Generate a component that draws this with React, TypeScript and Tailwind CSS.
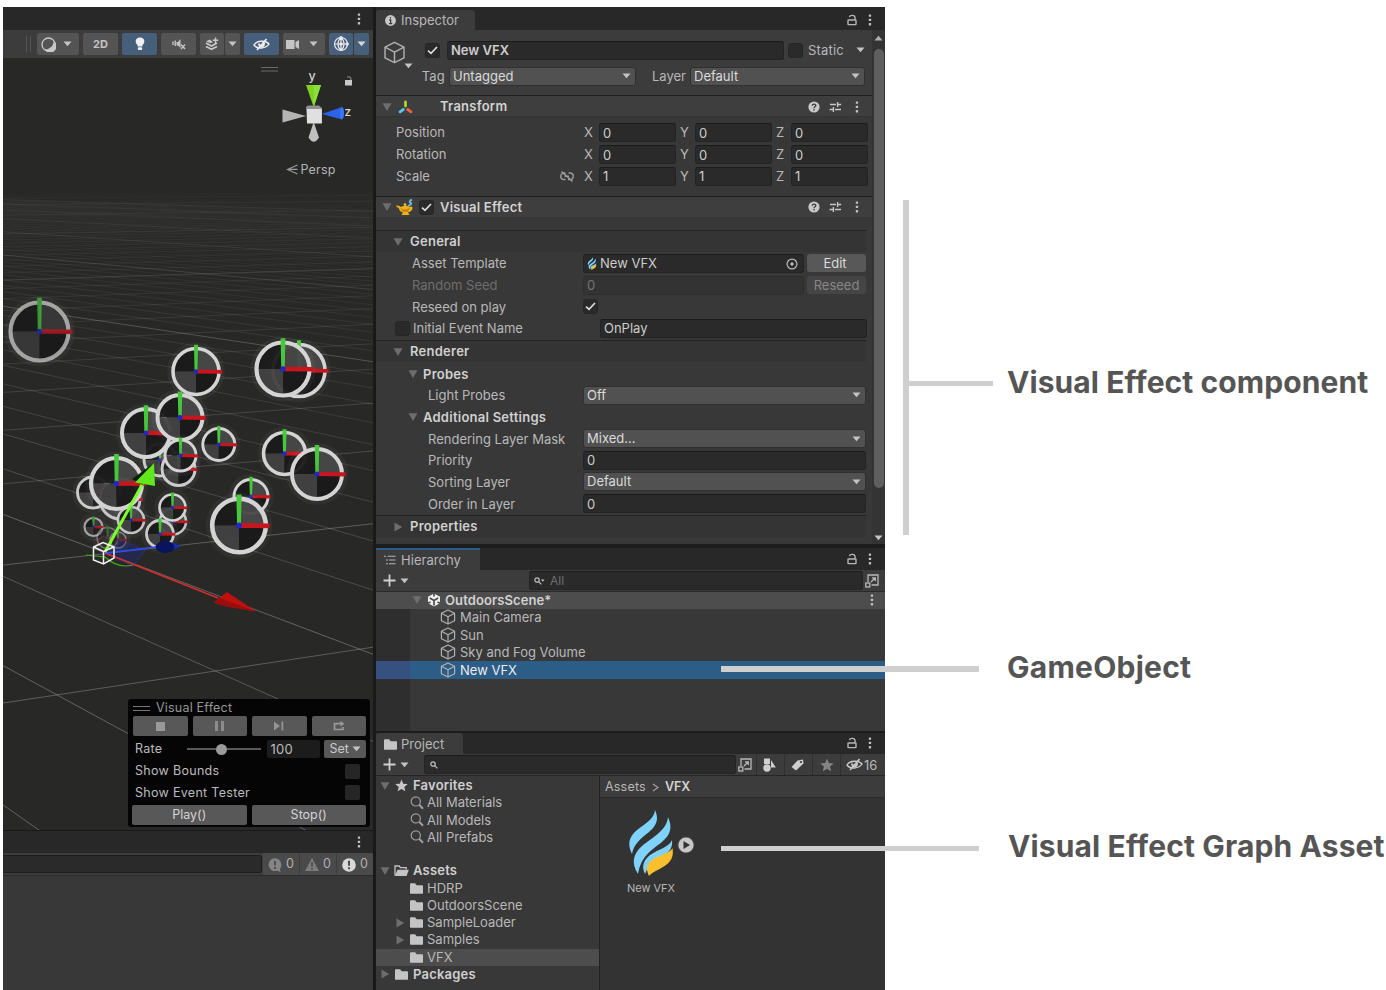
import React from "react";

type P = { children?: React.ReactNode; className?: string };

/* ---------- small drawings ---------- */

function Caret({ className = "text-[#c4c4c4]" }: { className?: string }) {
  return (
    <svg className={"shrink-0 " + className} width="9" height="6" viewBox="0 0 9 6">
      <path d="M0.5 0.5h8L4.5 5.3z" fill="currentColor" />
    </svg>
  );
}

function Fold({ open = true, className = "" }: { open?: boolean; className?: string }) {
  return (
    <svg className={"shrink-0 " + className} width="10" height="10" viewBox="0 0 10 10">
      <path d={open ? "M0.5 1.2h9L5 9z" : "M1.5 0.5v9L9.3 5z"} fill="#6d6d6d" />
    </svg>
  );
}

function Dots({ className = "" }: { className?: string }) {
  return (
    <svg className={"shrink-0 " + className} width="4" height="12" viewBox="0 0 4 12">
      <g fill="#c0c0c0">
        <rect x="0.8" y="0.5" width="2.3" height="2.3" rx="0.5" />
        <rect x="0.8" y="4.8" width="2.3" height="2.3" rx="0.5" />
        <rect x="0.8" y="9.1" width="2.3" height="2.3" rx="0.5" />
      </g>
    </svg>
  );
}

function Lock({ className = "" }: { className?: string }) {
  return (
    <svg className={"shrink-0 " + className} width="10" height="12" viewBox="0 0 10 12" fill="none" stroke="#b4b4b4" strokeWidth="1.4">
      <rect x="1" y="6" width="8" height="4.6" rx="0.6" />
      <path d="M8 6V3.6C8 0.9 3 0.6 2.4 3.2" />
    </svg>
  );
}

function Help() {
  return (
    <svg width="12" height="12" viewBox="0 0 12 12">
      <circle cx="6" cy="6" r="5.6" fill="#c8c8c8" />
      <path d="M4.2 4.7C4.3 2.5 7.9 2.5 7.8 4.6C7.7 5.8 6 5.8 6 7.2" fill="none" stroke="#3c3c3c" strokeWidth="1.3" />
      <rect x="5.3" y="8.1" width="1.4" height="1.4" fill="#3c3c3c" />
    </svg>
  );
}

function Preset() {
  return (
    <svg width="13" height="12" viewBox="0 0 13 12" stroke="#c8c8c8" strokeWidth="1.4" fill="none">
      <path d="M1 3.5h6M9 3.5h3.2M8.6 1v5M0.6 8.5h3.2M6 8.5h6M4.4 6v5" />
    </svg>
  );
}

function Cube({ size = 16, stroke = "#b0b0b0", w = 1.2 }: { size?: number; stroke?: string; w?: number }) {
  return (
    <svg className="shrink-0" width={size} height={size} viewBox="0 0 16 16" fill="none" stroke={stroke} strokeWidth={w} strokeLinejoin="round">
      <path d="M8 1L14.6 4.3V11.7L8 15L1.4 11.7V4.3z" />
      <path d="M1.4 4.3L8 7.7L14.6 4.3M8 7.7V15" />
    </svg>
  );
}

function Folder({ open = false }: { open?: boolean }) {
  return open ? (
    <svg className="shrink-0" width="15" height="12" viewBox="0 0 15 12">
      <path d="M1 10.5V1h4.2l1.2 1.6h5.8v2" fill="none" stroke="#c4c4c4" strokeWidth="1.3" />
      <path d="M3.4 4.8h11.4L12.6 11H1z" fill="#c4c4c4" />
    </svg>
  ) : (
    <svg className="shrink-0" width="13" height="11" viewBox="0 0 13 11">
      <path d="M0 1.2Q0 0.3 0.9 0.3h4.2L6.6 2.2h5.5q0.9 0 0.9 0.9v6.8q0 0.9-0.9 0.9H0.9Q0 10.8 0 9.9z" fill="#c4c4c4" />
    </svg>
  );
}

function Search() {
  return (
    <svg className="shrink-0" width="14" height="14" viewBox="0 0 14 14" fill="none" stroke="#a0a0a0">
      <circle cx="5.8" cy="5.4" r="4.6" strokeWidth="1.2" />
      <path d="M9.2 8.8L13 12.8" strokeWidth="2" />
    </svg>
  );
}

function SmallSearch({ menu = false }: { menu?: boolean }) {
  return (
    <svg className="shrink-0" width="11" height="8" viewBox="0 0 11 8" fill="none" stroke="#b8b8b8" strokeWidth="1.3">
      <circle cx="3" cy="3" r="2.2" />
      <path d="M4.6 4.6L7.4 7.4" />
      {menu && <path d="M7 2.6h3.6L8.8 4.8z" fill="#c4c4c4" stroke="none" />}
    </svg>
  );
}

function Popout() {
  return (
    <svg className="shrink-0" width="14" height="14" viewBox="0 0 14 14" fill="none" stroke="#b8b8b8" strokeWidth="1.3">
      <path d="M3 8V1h10v10H6.5" />
      <rect x="0.8" y="9" width="4" height="4" />
      <path d="M6 8L10 4M7 3.8h3.3V7" />
    </svg>
  );
}

function EyeOff({ color = "#c8c8c8" }: { color?: string }) {
  return (
    <svg className="shrink-0" width="17" height="13" viewBox="0 0 17 13" fill="none" stroke={color}>
      <path d="M1 7C3.5 2.6 12.5 1.8 16 6C13 10.8 4 11.4 1 7z" strokeWidth="1.4" />
      <path d="M6 5.5C6 9.5 11.3 9 11 5" strokeWidth="2" />
      <path d="M4 12L13.5 1" strokeWidth="1.6" />
    </svg>
  );
}

function Star({ size, color }: { size: number; color: string }) {
  return (
    <svg className="shrink-0" width={size} height={size} viewBox="0 0 24 24">
      <path d="M12 1l3.2 7.6 8.3.7-6.3 5.4 1.9 8.1L12 18.500l-7.100 4.300 1.900-8.100L.5 9.300l8.300-.7z" fill={color} />
    </svg>
  );
}

function VfxGlyph({ w, h }: { w: number; h: number }) {
  return (
    <svg className="shrink-0" width={w} height={h} viewBox="0 0 44 66">
      <path d="M26 0C30 9 28 15 20 22C11 29 5 34 3 44C-2 34 0 27 8 20C17 13 25 9 26 0z" fill="#7fd3fb" />
      <path d="M39 7C44 18 41 25 33 32C21 41 12 47 9 64C2 53 4 44 13 36C24 27 38 20 39 7z" fill="#7fd3fb" />
      <path d="M43 30C44 38 40 43 31 48C24 52 19 56 16 64C12 56 15 50 21 45C30 39 40 37 43 30z" fill="#7fd3fb" />
      <path d="M43.500 38C45 47 42 52 34 57C28 61 23 62 20 66C16 57 18 53 26 48C34 44 41 43 43.500 38z" fill="#fbc02d" />
    </svg>
  );
}

/* ---------- controls ---------- */

function Check({ on = false, className = "" }: { on?: boolean; className?: string }) {
  return (
    <span className={"flex size-[15px] shrink-0 items-center justify-center rounded-[3px] border border-[#262626] bg-[#2a2a2a] " + className}>
      {on && (
        <svg width="11" height="9" viewBox="0 0 11 9" fill="none" stroke="#dcdcdc" strokeWidth="1.7">
          <path d="M1 4.600L4 7.400L10 1" />
        </svg>
      )}
    </span>
  );
}

function Field({ children, className = "", disabled = false }: P & { disabled?: boolean }) {
  return (
    <span
      className={
        "flex h-[19px] items-center rounded-[3px] border pt-[1px] pl-[3px] " +
        (disabled ? "border-[#2e2e2e] bg-[#333333] text-[#757575] " : "border-[#242424] border-t-[#1b1b1b] bg-[#2a2a2a] text-[#cccccc] ") +
        className
      }
    >
      {children}
    </span>
  );
}

function Select({ children, className = "" }: P) {
  return (
    <span className={"flex h-[19px] items-center justify-between rounded-[3px] border border-[#303030] bg-[#515151] pr-[4px] pl-[3px] text-[#dadada] " + className}>
      {children}
      <Caret />
    </span>
  );
}

function Tab({ children, className = "" }: P) {
  return <div className={"flex items-center rounded-t-[3px] bg-[#3c3c3c] pt-[1px] " + className}>{children}</div>;
}

/* ---------- scene ---------- */

const bandA = Array.from({ length: 75 }, (_, n) => {
  const dy = 1 / (0.001575 + 0.000443 * (n - 1));
  return { y1: 170 + dy, y2: 170 + dy * (1281 / 911), major: (n - 1) % 10 === 3, dy };
});
const bandB = Array.from({ length: 60 }, (_, n) => {
  const dy = 1 / (0.001876 + 0.000655 * (n - 1));
  return { y1: 170 + dy, y2: 170 + dy * (3160 / 3530), major: (n - 1) % 10 === 1, dy };
});

// cx, cy, radius, ring width, opacity
const rings: number[][] = [
  [39.5, 331.5, 29, 4.2, 0.7],
  [196, 371.5, 23, 3.6, 1],
  [299, 370.5, 26, 3.6, 1],
  [283, 369, 26.5, 4.2, 1],
  [160, 460, 16, 3, 0.95],
  [146, 433, 24, 4, 1],
  [180, 417.5, 22.5, 4, 1],
  [178.500, 469, 16.500, 3, 0.95],
  [180.500, 455.500, 15.500, 3, 1],
  [218.800, 444.500, 16, 3, 1],
  [284.500, 453.500, 21, 3.600, 1],
  [317, 474, 25, 4, 1],
  [93, 492.500, 15.500, 2.800, 0.95],
  [120, 499, 20, 3, 0.9],
  [131, 520, 13, 2.600, 0.9],
  [116.500, 483.500, 25.500, 4.200, 1],
  [251, 496.500, 17, 3, 1],
  [239, 525.500, 26.800, 4.600, 1],
  [173, 521.500, 13, 2.600, 0.9],
  [160, 534, 13.500, 2.800, 0.95],
  [172.500, 507.500, 13, 2.600, 1],
  [93.500, 527, 9, 2.200, 0.7],
  [107.500, 538, 10.500, 1.400, 0.4],
  [118, 540, 8, 1.400, 0.5],
];

function Ring({ v }: { v: number[] }) {
  const [x, y, r, w, o] = v;
  const g = Math.max(2.4, w * 1.05);
  return (
    <g>
      <circle cx={x} cy={y} r={r + 2} fill="none" stroke="#ffffff" strokeOpacity={0.04} strokeWidth={w + 4} />
      <g opacity={o < 0.6 ? 0.3 : 0.95}>
        <path d={`M${x} ${y}V${y - r}A${r} ${r} 0 0 0 ${x - r} ${y}z`} fill="#1b1b1b" />
        <path d={`M${x} ${y}H${x + r}A${r} ${r} 0 0 0 ${x} ${y - r}z`} fill={o === 0.7 ? "#383838" : "#484848"} />
        <path d={`M${x} ${y}H${x - r}A${r} ${r} 0 0 0 ${x} ${y + r}z`} fill={o === 0.7 ? "#383838" : "#424242"} />
        <path d={`M${x} ${y}V${y + r}A${r} ${r} 0 0 0 ${x + r} ${y}z`} fill="#1a1a1a" />
      </g>
      <g opacity={o}>
        <circle cx={x} cy={y} r={r} fill="none" stroke="#d4d4d4" strokeWidth={w} />
        <path d={`M${x} ${y - g / 2}L${x + r * 1.14} ${y - g / 2 + 0.3}V${y + g / 2 + 0.3}L${x} ${y + g / 2}z`} fill="#c8161f" />
        <path d={`M${x - g / 2 + 0.5} ${y}L${x - g / 2 - 0.2} ${y - r * 1.16}H${x + g / 2 + 0.2}L${x + g / 2 - 0.5} ${y}z`} fill="#45c83a" />
        <circle cx={x} cy={y} r={g * 0.6} fill="#1c28c8" />
      </g>
    </g>
  );
}

function Scene() {
  return (
    <svg className="block" width="370" height="772" viewBox="3 58 370 772">
      <rect x="3" y="58" width="370" height="772" fill="#282827" />
      <g stroke="#d8d8d8">
        {bandA.map((l, i) => (
          <line key={i} x1="3" y1={l.y1} x2="373" y2={l.y2} strokeWidth="0.8" strokeOpacity={Math.min(0.42, (l.major ? 0.02 : 0) + l.dy / (l.major ? 480 : 1150))} />
        ))}
        {bandB.map((l, i) => (
          <line key={i} x1="3" y1={l.y1} x2="373" y2={l.y2} strokeWidth="0.8" strokeOpacity={Math.min(0.38, (l.major ? 0.02 : 0) + l.dy / (l.major ? 650 : 1250))} />
        ))}
      </g>
      {rings.map((v, i) => (
        <Ring key={i} v={v} />
      ))}

      <path d="M122 541L145 550L133 566L104 553z" fill="#1b2bb0" fillOpacity="0.28" stroke="#2437c8" strokeOpacity="0.6" strokeWidth="0.8" />
      <path d="M86 555L105 557Q118 569 133 565" fill="none" stroke="#3fae20" strokeWidth="1.2" />
      <path d="M97 545C100 530 112 538 113 549" fill="none" stroke="#b23a3a" strokeOpacity="0.6" strokeWidth="1" />
      <path d="M105 553L218 598" stroke="#d42c2c" strokeWidth="1.600" />
      <path d="M213.500 602.500L227 592L256 611.500L224 606z" fill="#c01010" />
      <path d="M213.500 602.500L220 598L256 611.500L224 606z" fill="#9a0d0d" />
      <path d="M106 553L160 546.500" stroke="#2c49ff" strokeWidth="1.600" />
      <path d="M165 540.500L181 546L165 553z" fill="#1431c4" />
      <ellipse cx="165" cy="547" rx="9.500" ry="6" fill="#08145e" />
      <path d="M105 552L143 483" stroke="#7dff2e" strokeWidth="3" />
      <path d="M154 463L132 479L143 485z" fill="#0d1c05" />
      <path d="M154 463L155 486L135 482.500z" fill="#5fe81c" />
      <g fill="none" stroke="#f2f2f2" strokeWidth="1.500">
        <path d="M93.500 547L103 542.500L114 547V558L103.500 564L93.500 560z" />
        <path d="M93.500 547L103.500 551.500L114 547M103.500 551.500V564" />
      </g>

      <path d="M261 67.500H278M261 71H278" stroke="#6a6a6a" strokeWidth="1.200" />
      <path d="M306 85H321L313.700 107z" fill="#7ed321" />
      <path d="M313.700 85H321L313.700 107z" fill="#8ce03a" />
      <path d="M282.500 109.500V122.500L306 116z" fill="#b4b4b4" />
      <path d="M322 114L342 107V119.500z" fill="#2a62e8" />
      <ellipse cx="342" cy="113.200" rx="2" ry="6.200" fill="#3a76ff" />
      <path d="M313.700 122L308.500 137.500Q313.700 146 319 137.500z" fill="#c0c0c0" />
      <path d="M306 107L308 105.500H319L322 108V123H307z" fill="#8f8f8f" />
      <rect x="307" y="109" width="14.800" height="14.500" fill="#e0e0e0" />
      <text x="308.500" y="80" fontSize="12.500" fontWeight="500" fill="#d6d6d6">y</text>
      <text x="344.500" y="116" fontSize="12" fontWeight="500" fill="#d6d6d6">z</text>
      <rect x="345" y="80" width="7" height="5.500" fill="#c8c8c8" />
      <path d="M350.800 80V77.800Q348.800 76 347 77.400" fill="none" stroke="#8a8a8a" strokeWidth="1.100" />
      <path d="M297.500 165L287.500 169.400L297.500 174M297.500 169.400H288" fill="none" stroke="#9a9a9a" strokeWidth="1.100" />
      <text x="300.500" y="174" fontSize="12.500" letterSpacing="0.2" fill="#b4b4b4">Persp</text>
    </svg>
  );
}

function ToolButton({ children, className = "", on = false }: P & { on?: boolean }) {
  return (
    <div className={"flex h-[22px] items-center justify-center rounded-[2px] " + (on ? "bg-[#46607c] " : "bg-[#545454] ") + className}>{children}</div>
  );
}

function SceneToolbar() {
  return (
    <div className="flex h-[28px] items-center bg-[#3c3c3c] pl-[23px]">
      <div className="mr-[6px] h-[16px] w-[5px] border-x border-[#555]" />
      <ToolButton className="w-[42px] gap-[7px] pr-[3px]">
        <svg width="15" height="15" viewBox="0 0 15 15">
          <circle cx="7.500" cy="7.500" r="6.500" fill="none" stroke="#c8c8c8" strokeWidth="1.300" />
          <path d="M13 4A6.500 6.500 0 1 1 3.500 12.600Q11.500 12.500 13 4z" fill="#c8c8c8" />
        </svg>
        <Caret />
      </ToolButton>
      <ToolButton className="ml-[4px] w-[35px] pt-[1px] text-[11px] font-bold text-[#c4c4c4]">2D</ToolButton>
      <ToolButton on className="ml-[4px] w-[35px]">
        <svg width="10" height="14" viewBox="0 0 10 14" fill="#f0f0f0">
          <path d="M5 0.500C9.800 0.500 10.600 5.500 7.400 8V9.500H2.600V8C-0.600 5.500 0.200 0.500 5 0.500z" />
          <rect x="2.800" y="10.300" width="4.400" height="2.600" rx="1" />
        </svg>
      </ToolButton>
      <ToolButton className="ml-[4px] w-[35px]">
        <svg width="14" height="12" viewBox="0 0 14 12" fill="none" stroke="#c4c4c4" strokeWidth="1.400">
          <path d="M1 3.500V7M3.200 2.500V8" />
          <path d="M4.500 4H6L8.500 1V10L6 7.500H4.500z" fill="#c4c4c4" stroke="none" />
          <path d="M9 6.500L13 11M13 6.500L9 11" />
        </svg>
      </ToolButton>
      <ToolButton className="ml-[4px] w-[24px]">
        <svg width="15" height="14" viewBox="0 0 15 14" fill="none" stroke="#c8c8c8" strokeWidth="1.800">
          <path d="M1 9.500L6.500 12.200L12 9.500M1 6L6.500 9L12 6" />
          <path d="M1 4.200L5 2.500L8 5.500L5 6z" fill="#c8c8c8" stroke="none" />
          <path d="M10.500 0.500V6M7.800 3.200H13.200" strokeWidth="1.400" />
        </svg>
      </ToolButton>
      <ToolButton className="ml-px w-[15px]"><Caret /></ToolButton>
      <ToolButton on className="ml-[4px] w-[35px]"><EyeOff color="#f0f0f0" /></ToolButton>
      <ToolButton className="ml-[4px] w-[42px] gap-[9px] pr-[4px]">
        <svg width="14" height="11" viewBox="0 0 14 11" fill="#c4c4c4">
          <rect x="0" y="1" width="8.500" height="9" />
          <path d="M9.500 3L13 1V10L9.500 8z" />
        </svg>
        <Caret />
      </ToolButton>
      <ToolButton on className="ml-[4px] w-[24px]">
        <svg width="16" height="16" viewBox="0 0 16 16" fill="none" stroke="#e8e8e8" strokeWidth="1.200">
          <circle cx="8" cy="8" r="6.500" />
          <path d="M1.500 8H14.500M8 1.500V14.500M8 1.500C4 5 4 11 8 14.500M8 1.500C12 5 12 11 8 14.500" />
          <g fill="#e8e8e8" stroke="none"><circle cx="8" cy="1.800" r="1.700" /><circle cx="14.200" cy="8" r="1.700" /><circle cx="8" cy="8" r="1.700" /></g>
        </svg>
      </ToolButton>
      <ToolButton on className="ml-px w-[15px]"><Caret className="text-[#d8d8d8]" /></ToolButton>
    </div>
  );
}

function EffectOverlay() {
  const btn = "flex h-[20px] items-center justify-center rounded-[2px] bg-[#585858]";
  return (
    <div className="absolute bottom-[3px] left-[125px] flex h-[128px] w-[242px] flex-col rounded-[3px] bg-[#050505] pr-[4px] pl-[5px] text-[12.500px] text-[#bcbcbc]">
      <div className="flex h-[17px] items-center gap-[6px] pt-[1px] tracking-[0.2px] text-[#969696]">
        <span className="h-[5px] w-[17px] border-y border-[#777]" />
        Visual Effect
      </div>
      <div className="grid grid-cols-4 gap-[5px]">
        <div className={btn}><span className="size-[9px] bg-[#999]" /></div>
        <div className={btn}><span className="h-[10px] w-[9px] border-x-[3px] border-[#8c8c8c]" /></div>
        <div className={btn}>
          <svg width="10" height="10" viewBox="0 0 10 10" fill="#949494"><path d="M0 0.500L6 5L0 9.500z" /><rect x="7.500" y="0.500" width="1.800" height="9" /></svg>
        </div>
        <div className={btn}>
          <svg width="12" height="10" viewBox="0 0 12 10" fill="none" stroke="#999" strokeWidth="1.700"><path d="M8 2.700H1.500V8.500H10V6" /><path d="M7.500 0L11.500 2.700L7.500 5.400z" fill="#999" stroke="none" /></svg>
        </div>
      </div>
      <div className="flex h-[25px] items-center pt-[1px] pl-[2px]">
        <span className="w-[52px] tracking-[0.3px]">Rate</span>
        <span className="flex w-[75px] items-center">
          <span className="h-[2px] w-[29px] bg-[#5a5a5a]" />
          <span className="size-[11px] rounded-full bg-[#9a9a9a]" />
          <span className="h-[2px] flex-1 bg-[#5a5a5a]" />
        </span>
        <span className="ml-[6px] flex h-[18px] w-[53px] items-center rounded-[2px] bg-[#1c1c1c] pt-[1px] pl-[3px] text-[13px] tracking-[0.3px]">100</span>
        <span className="ml-[4px] flex h-[18px] w-[42px] items-center justify-center gap-[3px] rounded-[2px] bg-[#585858] text-[#c8c8c8]">Set <Caret /></span>
      </div>
      <div className="flex h-[21.500px] items-center justify-between pr-[6px] pb-[1px] pl-[2px] tracking-[0.3px]">Show Bounds<span className="size-[15px] rounded-[2px] bg-[#262626]" /></div>
      <div className="flex h-[21.500px] items-center justify-between pr-[6px] pb-[1px] pl-[2px] tracking-[0.3px]">Show Event Tester<span className="size-[15px] rounded-[2px] bg-[#262626]" /></div>
      <div className="-ml-[1px] grid grid-cols-2 gap-[5px] pt-[1px] text-[#d4d4d4]">
        <div className={btn}>Play()</div>
        <div className={btn}>Stop()</div>
      </div>
    </div>
  );
}

function LeftColumn() {
  const badge = "ml-px flex h-[22px] w-[36px] items-center justify-center gap-[4px] bg-[#4a4a4a] pt-[1px] text-[12.500px] text-[#b0b0b0]";
  return (
    <div className="flex w-[370px] shrink-0 flex-col">
      <div className="flex h-[23px] items-center justify-end bg-[#282828] pt-[1px] pr-[12px]"><Dots /></div>
      <SceneToolbar />
      <div className="relative h-[772px]">
        <Scene />
        <EffectOverlay />
      </div>
      <div className="flex h-[23px] items-center justify-end border-t border-[#191919] bg-[#282828] pr-[12px]"><Dots /></div>
      <div className="flex h-[22px] items-center bg-[#3c3c3c]">
        <div className="h-[18px] flex-1 rounded-r-[3px] border border-l-0 border-[#1e1e1e] bg-[#2a2a2a]" />
        <div className={badge + " ml-[3px]"}>
          <svg width="14" height="14" viewBox="0 0 14 14"><path d="M7 0.300A6.400 6.400 0 0 1 13.400 6.700Q13.400 9 12 11L12.500 14L9 12.800A6.400 6.400 0 1 1 7 0.300" fill="#858585" /><path d="M7 3V7.500M7 9V11" stroke="#4a4a4a" strokeWidth="1.800" /></svg>0
        </div>
        <div className={badge}>
          <svg width="14" height="13" viewBox="0 0 14 13"><path d="M7 0L14 13H0z" fill="#7c7c7c" /><path d="M7 4V8.500M7 9.800V11.500" stroke="#4a4a4a" strokeWidth="1.600" /></svg>0
        </div>
        <div className={badge}>
          <svg width="14" height="14" viewBox="0 0 14 14"><circle cx="7" cy="7" r="6.800" fill="#d8d8d8" /><path d="M7 2.800V7.800M7 9.200V11.200" stroke="#3c3c3c" strokeWidth="1.800" /></svg>0
        </div>
      </div>
      <div className="flex-1 border-t border-[#2c2c2c] bg-[#383838]" />
    </div>
  );
}

/* ---------- inspector ---------- */

function ComponentHeader({ icon, title }: { icon: React.ReactNode; title: string }) {
  return (
    <div className="flex h-[22px] shrink-0 items-center border-t border-[#1f1f1f] border-b border-b-[#343434] bg-[#3e3e3e] pt-[1px] pr-[13px] pl-[6px]">
      <Fold />
      <div className="flex w-[48px] items-center pl-[4px]">{icon}</div>
      <span className="flex-1 font-semibold tracking-[0.25px] text-[#d2d2d2]">{title}</span>
      <Help />
      <span className="ml-[9px]"><Preset /></span>
      <Dots className="ml-[13px]" />
    </div>
  );
}

function Vec({ label, v, link = false }: { label: string; v: string; link?: boolean }) {
  return (
    <div className="flex h-[21.700px] items-center pl-[20px]">
      <span className="w-[164px]">{label}</span>
      <span className="w-[24px]">
        {link && (
          <svg width="14" height="11" viewBox="0 0 14 11" fill="none" stroke="#9c9c9c" strokeWidth="1.400">
            <path d="M5.500 2H4A3 3 0 0 0 4 8.500H5.500M8.500 2H10A3 3 0 0 1 10 8.500H8M4.500 5.200H9M1.500 0.500L12.500 10.500" />
          </svg>
        )}
      </span>
      <span className="w-[15px]">X</span><Field className="w-[77px]">{v}</Field>
      <span className="ml-[4px] w-[15px]">Y</span><Field className="w-[77px]">{v}</Field>
      <span className="ml-[4px] w-[15px]">Z</span><Field className="w-[77px]">{v}</Field>
    </div>
  );
}

function Prop({ label, children, indent = "pl-[36px]", labelClass = "" }: { label: string; children: React.ReactNode; indent?: string; labelClass?: string }) {
  return (
    <div className="flex h-[21.650px] items-center">
      <span className={"w-[207px] shrink-0 pt-[1px] " + indent + " " + labelClass}>{label}</span>
      {children}
    </div>
  );
}

function Section({ label, open = true }: { label: string; open?: boolean }) {
  return (
    <div className="mr-[6px] flex h-[22.150px] items-center gap-[7px] border-t border-[#222] bg-[#343434] pl-[17px] font-semibold tracking-[0.25px] text-[#d0d0d0]">
      <Fold open={open} />{label}
    </div>
  );
}

function SubSection({ label }: { label: string }) {
  return (
    <div className="flex h-[21.650px] items-center gap-[5px] pl-[32px] font-semibold tracking-[0.25px] text-[#d0d0d0]">
      <Fold /><span className="pt-[1px]">{label}</span>
    </div>
  );
}

function Inspector() {
  const deep = "pl-[52px]";
  return (
    <div className="flex h-[537px] flex-col bg-[#383838]">
      <div className="flex h-[23px] justify-between bg-[#282828] pt-[3px] pr-[13px]">
        <Tab className="w-[99px] gap-[5px] pl-[9px]">
          <svg width="11" height="11" viewBox="0 0 11 11"><circle cx="5.500" cy="5.500" r="5.400" fill="#c8c8c8" /><path d="M5.500 2V3.600M4.200 5H5.700V8.800M4 8.600H7.300" stroke="#3c3c3c" strokeWidth="1.300" fill="none" /></svg>
          Inspector
        </Tab>
        <div className="flex items-center gap-[11px] pb-[1px]"><Lock /><Dots /></div>
      </div>
      <div className="flex h-[514px]">
        <div className="flex w-[496px] flex-col">
          <div className="flex h-[65px] shrink-0 bg-[#3c3c3c]">
            <div className="relative w-[48px] pt-[11px] pl-[7px]">
              <Cube size={23} w={1} />
              <span className="absolute top-[33px] left-[28px] flex"><Caret /></span>
            </div>
            <div className="flex flex-1 flex-col gap-[6px] pt-[10px]">
              <div className="flex h-[20px] items-center">
                <Check on className="ml-[1px]" />
                <Field className="ml-[7px] w-[337px] font-semibold">New VFX</Field>
                <Check className="ml-[4px]" />
                <span className="ml-[5px] tracking-[0.2px]">Static</span>
                <Caret className="ml-[12px] text-[#c4c4c4]" />
              </div>
              <div className="flex h-[20px] items-center">
                <span className="-ml-[3px] w-[24px] text-right tracking-[0.2px]">Tag</span>
                <Select className="ml-[4px] w-[187px]">Untagged</Select>
                <span className="ml-[16px]">Layer</span>
                <Select className="ml-[4px] w-[175px]">Default</Select>
              </div>
            </div>
          </div>
          <ComponentHeader
            title="Transform"
            icon={
              <svg className="ml-[2px]" width="15" height="14" viewBox="0 0 15 14" strokeWidth="2.800" strokeLinecap="round">
                <path d="M7.500 2V6" stroke="#a5d629" /><path d="M5.300 9.500L2 11.800" stroke="#5cc3f0" /><path d="M9.700 9.500L13 11.800" stroke="#f0653a" />
              </svg>
            }
          />
          <div className="flex h-[78.500px] shrink-0 flex-col pt-[5px]">
            <Vec label="Position" v="0" />
            <Vec label="Rotation" v="0" />
            <Vec label="Scale" v="1" link />
          </div>
          <ComponentHeader
            title="Visual Effect"
            icon={
              <>
                <svg width="18" height="17" viewBox="0 0 18 17">
                  <path d="M0.500 6.500Q3 6 5 8Q9 5 14 8Q17 6.500 16.500 9.500Q16 12 12 13.500L13.500 16H5.500L7 13.500Q3.500 12.500 3 9.500Q2.500 8 0.500 8z" fill="#eeb215" />
                  <path d="M4 9Q9 12 14 8.500L12 13H7z" fill="#c98509" />
                  <circle cx="9" cy="5.500" r="1.300" fill="#f5c93a" />
                  <path d="M12 7Q17 5 14 3.500Q13 2 16 0.500" fill="none" stroke="#6bb7d8" strokeWidth="2" />
                </svg>
                <Check on className="ml-[5px]" />
              </>
            }
          />
          <div className="flex flex-1 flex-col pt-[12.500px]">
            <Section label="General" />
            <div className="h-[0.500px]" />
            <Prop label="Asset Template">
              <Field className="w-[221px] justify-between pr-[5px]">
                <span className="flex items-center gap-[3px]"><VfxGlyph w={10} h={13} />New VFX</span>
                <svg width="12" height="12" viewBox="0 0 12 12"><circle cx="6" cy="6" r="4.900" fill="none" stroke="#b8b8b8" strokeWidth="1.200" /><circle cx="6" cy="6" r="1.700" fill="#b8b8b8" /></svg>
              </Field>
              <span className="ml-[3px] flex h-[18px] w-[59px] items-center justify-center rounded-[3px] bg-[#585858] pr-[3px] text-[#dadada]">Edit</span>
            </Prop>
            <Prop label="Random Seed" labelClass="text-[#6e6e6e]">
              <Field disabled className="w-[221px]">0</Field>
              <span className="ml-[3px] flex h-[18px] w-[59px] items-center justify-center rounded-[3px] bg-[#454545] text-[#858585]">Reseed</span>
            </Prop>
            <Prop label="Reseed on play"><Check on /></Prop>
            <div className="flex h-[21.650px] items-center pl-[19px]">
              <Check />
              <span className="w-[190px] pt-[1px] pl-[3px]">Initial Event Name</span>
              <Field className="w-[267px]">OnPlay</Field>
            </div>
            <div className="h-[1px]" />
            <Section label="Renderer" />
            <div className="h-[0.500px]" />
            <SubSection label="Probes" />
            <Prop indent={deep} label="Light Probes"><Select className="w-[283px]">Off</Select></Prop>
            <SubSection label="Additional Settings" />
            <Prop indent={deep} label="Rendering Layer Mask"><Select className="w-[283px]">Mixed...</Select></Prop>
            <Prop indent={deep} label="Priority"><Field className="w-[283px]">0</Field></Prop>
            <Prop indent={deep} label="Sorting Layer"><Select className="w-[283px]">Default</Select></Prop>
            <Prop indent={deep} label="Order in Layer"><Field className="w-[283px]">0</Field></Prop>
            <div className="h-[1px]" />
            <Section label="Properties" open={false} />
          </div>
        </div>
        <div className="flex w-[13px] flex-col items-center bg-[#343434] pt-[5px] pb-[2px]">
          <svg width="9" height="6" viewBox="0 0 9 6"><path d="M0.500 5.500h8L4.500 0.700z" fill="#b0b0b0" /></svg>
          <div className="mt-[8px] h-[439px] w-[10px] rounded-full bg-[#5f5f5f]" />
          <div className="mt-auto pb-[1px]"><Caret /></div>
        </div>
      </div>
    </div>
  );
}

/* ---------- hierarchy ---------- */

function AddButton() {
  return (
    <div className="flex items-center gap-[4px]">
      <svg width="13" height="13" viewBox="0 0 13 13"><path d="M6.500 0.500V12.500M0.500 6.500H12.500" stroke="#d0d0d0" strokeWidth="1.800" /></svg>
      <Caret />
    </div>
  );
}

function Hierarchy() {
  return (
    <div className="flex h-[187px] flex-col border-t-[4px] border-[#1c1c1c] bg-[#383838]">
      <div className="flex h-[22px] justify-between bg-[#282828] pr-[13px]">
        <div className="flex w-[104px] items-center gap-[5px] border-t-2 border-[#2f5b88] bg-[#3c3c3c] pl-[8px]">
          <svg width="12" height="10" viewBox="0 0 12 10" stroke="#b4b4b4" strokeWidth="1.100"><path d="M0 1.200H2M3.500 1.200H11.500M2 5H4M5 5H11.500M2 8.800H4M5 8.800H11.500" /></svg>
          <span className="tracking-[0.05px]">Hierarchy</span>
        </div>
        <div className="flex items-center gap-[11px]"><Lock /><Dots /></div>
      </div>
      <div className="flex h-[21px] items-center bg-[#3c3c3c] pr-[6px] pl-[7px]">
        <AddButton />
        <Field className="ml-auto w-[334px] gap-[5px] pl-[4px] text-[12px]">
          <SmallSearch menu />
          <span className="text-[#6e6e6e]">All</span>
        </Field>
        <span className="ml-[2px]"><Popout /></span>
      </div>
      <div className="flex h-[17.500px] items-center border-t border-[#2a2a2a] bg-[#4d4d4d] pr-[11px] pl-[36px] font-semibold tracking-[0.1px] text-[#d2d2d2]">
        <Fold />
        <svg className="mr-[4px] ml-[5px]" width="14" height="14" viewBox="0 0 14 14">
          <path d="M7 0.500L13 3.800V10.200L7 13.500L1 10.200V3.800z" fill="#f0f0f0" />
          <path d="M7 7.500V12.500M7 7.500L2.800 5M7 7.500L11.200 5" stroke="#4d4d4d" strokeWidth="1.700" />
          <path d="M7 0V3.500M0.500 10.500L3.500 9M13.500 10.500L10.500 9" stroke="#4d4d4d" strokeWidth="1.700" />
        </svg>
        <span className="flex-1">OutdoorsScene*</span>
        <Dots />
      </div>
      <div className="flex flex-1">
        <div className="flex w-[34px] flex-col bg-[#2e2e2e]"><span className="mt-[52.500px] h-[17.500px] bg-[#36507f]" /></div>
        <div className="flex flex-1 flex-col">
          {["Main Camera", "Sun", "Sky and Fog Volume", "New VFX"].map((n, i) => (
            <div key={n} className={"flex h-[17.500px] items-center gap-[4px] pl-[30px] " + (i === 3 ? "bg-[#2c5d87] text-[#ececec]" : "")}>
              <Cube /><span className="pt-[1px]">{n}</span>
            </div>
          ))}
        </div>
      </div>
    </div>
  );
}

/* ---------- project ---------- */

function TreeRow({ children, className = "pl-[40px]" }: P) {
  return <div className={"flex h-[17.250px] items-center " + className}>{children}</div>;
}

const bold = "font-semibold tracking-[0.2px] text-[#d0d0d0]";

function Project() {
  return (
    <div className="flex flex-1 flex-col border-t-2 border-[#1c1c1c] bg-[#383838]">
      <div className="flex h-[21px] justify-between bg-[#282828] pr-[13px]">
        <Tab className="w-[87px] gap-[4px] pl-[8px]"><Folder />Project</Tab>
        <div className="flex items-center gap-[11px] pb-[1px]"><Lock /><Dots /></div>
      </div>
      <div className="flex h-[22px] items-center border-b border-[#252525] bg-[#3c3c3c] pr-[5px] pl-[7px]">
        <AddButton />
        <Field className="ml-[15px] w-[312px] pl-[5px]"><SmallSearch /></Field>
        <span className="ml-[2px] flex"><Popout /></span>
        <span className="ml-[4px] flex h-[21px] w-[28px] items-center justify-center border-l border-[#303030] pr-[2px]">
          <svg width="13" height="14" viewBox="0 0 13 14" fill="#d0d0d0"><rect x="1" y="0.500" width="6" height="5.500" /><circle cx="4" cy="10" r="3.700" /><path d="M8 2L12.800 9.500H8z" /></svg>
        </span>
        <span className="flex h-[21px] w-[28px] items-center justify-center border-l border-[#303030] pr-[2px]">
          <svg width="13" height="12" viewBox="0 0 13 12"><path d="M6.500 1.500L12 0.500L12.500 4.500L5 11.500L0.500 8z" fill="#d0d0d0" /><circle cx="10" cy="3" r="1.100" fill="#3c3c3c" /></svg>
        </span>
        <span className="flex h-[21px] w-[28px] items-center justify-center border-l border-[#303030]"><Star size={14} color="#858585" /></span>
        <span className="flex h-[21px] flex-1 items-center gap-[1px] border-l border-[#303030] pl-[5px] text-[13px]"><EyeOff /><span className="pt-[1px]">16</span></span>
      </div>
      <div className="flex flex-1">
        <div className="flex w-[224px] flex-col border-r border-[#222] pt-[1px]">
          <TreeRow className={"gap-[5px] pl-[4px] " + bold}><Fold /><Star size={13} color="#c8c8c8" />Favorites</TreeRow>
          {["All Materials", "All Models", "All Prefabs"].map((n) => (
            <TreeRow key={n} className="gap-[3px] pl-[34px]"><Search /><span>{n}</span></TreeRow>
          ))}
          <div className="h-[16.250px]" />
          <TreeRow className={"gap-[4px] pl-[4px] " + bold}><Fold /><Folder open /><span>Assets</span></TreeRow>
          <TreeRow className="gap-[4px] pl-[34px]"><Folder />HDRP</TreeRow>
          <TreeRow className="gap-[4px] pl-[34px]"><Folder />OutdoorsScene</TreeRow>
          <TreeRow className="gap-[4px] pl-[19px]"><Fold open={false} className="mr-[1px]" /><Folder />SampleLoader</TreeRow>
          <TreeRow className="gap-[4px] pl-[19px]"><Fold open={false} className="mr-[1px]" /><Folder />Samples</TreeRow>
          <TreeRow className="gap-[4px] bg-[#4d4d4d] pl-[34px]"><Folder />VFX</TreeRow>
          <TreeRow className={"gap-[5px] pl-[4px] " + bold}><Fold open={false} /><Folder /><span>Packages</span></TreeRow>
        </div>
        <div className="flex flex-1 flex-col bg-[#333333]">
          <div className="flex h-[22px] items-center gap-[6px] border-b border-[#2c2c2c] bg-[#3c3c3c] pt-[1px] pl-[5px] text-[12.500px]">
            <span className="tracking-[0.2px]">Assets</span>
            <svg width="7" height="9" viewBox="0 0 7 9"><path d="M1 1L6 4.500L1 8" fill="none" stroke="#a0a0a0" strokeWidth="1.200" /></svg>
            <span className="font-semibold text-[#d0d0d0]">VFX</span>
          </div>
          <div className="flex w-[102px] flex-col items-center pt-[12px]">
            <div className="relative h-[66px] w-[44px]">
              <VfxGlyph w={44} h={66} />
              <svg className="absolute top-[26px] left-[48px]" width="18" height="18" viewBox="0 0 18 18"><circle cx="9" cy="9" r="8.500" fill="#4a4a4a" /><circle cx="9" cy="9" r="7.600" fill="#c8c8c8" /><path d="M6.500 5L13 9L6.500 13z" fill="#333" /></svg>
            </div>
            <span className="mt-[7px] text-[11px]">New VFX</span>
          </div>
        </div>
      </div>
    </div>
  );
}

/* ---------- page ---------- */

export default function App() {
  return (
    <div className="relative flex h-[990px] w-[1386px] overflow-hidden bg-white pt-[7px] pl-[3px] font-['Inter','Liberation_Sans',sans-serif]">
      <div className="flex h-[983px] w-[882px] shrink-0 gap-[3px] bg-[#191919] text-[13px] leading-none whitespace-nowrap text-[#b8b8b8]">
        <LeftColumn />
        <div className="flex w-[509px] flex-col">
          <Inspector />
          <Hierarchy />
          <Project />
        </div>
      </div>
      <div className="flex w-[501px] shrink-0 flex-col pl-[122px] text-[30px] leading-[36px] font-bold whitespace-nowrap text-[#555555]">
        <span className="mt-[357px] tracking-[0.08px]">Visual Effect component</span>
        <span className="mt-[249px] tracking-[0.25px]">GameObject</span>
        <span className="mt-[143px] pl-[1px] tracking-[0.13px]">Visual Effect Graph Asset</span>
      </div>
      <div className="absolute top-[200px] left-[903px] h-[335px] w-[6px] bg-[#cfcfcf]" />
      <div className="absolute top-[381px] left-[909px] h-[5px] w-[84px] bg-[#cfcfcf]" />
      <div className="absolute top-[666px] left-[721px] h-[6px] w-[258px] bg-[#cfcfcf]" />
      <div className="absolute top-[846px] left-[721px] h-[5px] w-[258px] bg-[#cfcfcf]" />
    </div>
  );
}
